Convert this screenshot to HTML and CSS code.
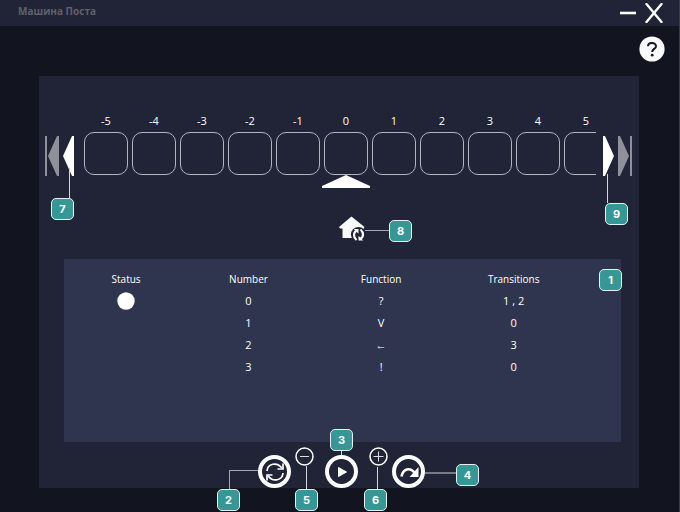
FILE: index.html
```html
<!DOCTYPE html>
<html lang="ru">
<head>
<meta charset="utf-8">
<title>Машина Поста</title>
<link rel="stylesheet" href="styles.css">
</head>
<body>
<header class="titlebar">
  <h1 class="title">Машина Поста</h1>
  <button class="icon-btn minimize" aria-label="Minimize"><svg width="16" height="4" viewBox="0 0 16 4"><path d="M0 2h16" stroke="#fff" stroke-width="2.6"/></svg></button>
  <button class="icon-btn" aria-label="Close"><svg width="18" height="20" viewBox="0 0 18 20"><path d="M1.500 1 16.500 19M16.500 1 1.500 19" stroke="#fff" stroke-width="2.4" stroke-linecap="round"/></svg></button>
</header>
<main class="workspace">
  <div class="help-row">
    <button class="icon-btn" aria-label="Help"><svg width="26" height="26" viewBox="0 0 26 26"><circle cx="13" cy="13" r="12.600" fill="#fafafa"/><path d="M9 10.300C9 5.800 17 5.800 17 10.200C17 13 13.200 12.800 13.200 16" fill="none" stroke="#151722" stroke-width="2"/><circle cx="13.200" cy="19.200" r="1.400" fill="#151722"/></svg></button>
  </div>
  <section class="panel">
    <div class="tape">
      <div class="arrows arrows-left">
        <button class="icon-btn" aria-label="To start"><svg width="14" height="40" viewBox="0 0 14 40"><path d="M0 0h2v40H0zM14 0v40h-2L3 20 12 0z" fill="#90909a"/></svg></button>
        <span class="anchor"><button class="icon-btn" aria-label="Left"><svg width="11" height="40" viewBox="0 0 11 40"><path d="M11 0v40H9L0 20 9 0z" fill="#fff"/></svg></button><i class="wire wire-7"></i><b class="badge badge-7">7</b></span>
      </div>
      <div class="viewport">
        <div class="cells">
          <div class="cell"><span>-5</span><button class="box" aria-label="Cell -5"></button></div>
          <div class="cell"><span>-4</span><button class="box" aria-label="Cell -4"></button></div>
          <div class="cell"><span>-3</span><button class="box" aria-label="Cell -3"></button></div>
          <div class="cell"><span>-2</span><button class="box" aria-label="Cell -2"></button></div>
          <div class="cell"><span>-1</span><button class="box" aria-label="Cell -1"></button></div>
          <div class="cell"><span>0</span><button class="box" aria-label="Cell 0"></button></div>
          <div class="cell"><span>1</span><button class="box" aria-label="Cell 1"></button></div>
          <div class="cell"><span>2</span><button class="box" aria-label="Cell 2"></button></div>
          <div class="cell"><span>3</span><button class="box" aria-label="Cell 3"></button></div>
          <div class="cell"><span>4</span><button class="box" aria-label="Cell 4"></button></div>
          <div class="cell"><span>5</span><button class="box" aria-label="Cell 5"></button></div>
        </div>
        <svg class="pointer" width="48" height="13" viewBox="0 0 48 13"><path d="M24 0 48 11v2H0v-2z" fill="#fff"/></svg>
      </div>
      <div class="arrows arrows-right">
        <span class="anchor"><button class="icon-btn" aria-label="Right"><svg width="11" height="40" viewBox="0 0 11 40"><path d="M0 0v40h2l9-20L2 0z" fill="#fff"/></svg></button><i class="wire wire-9"></i><b class="badge badge-9">9</b></span>
        <button class="icon-btn" aria-label="To end"><svg width="14" height="40" viewBox="0 0 14 40"><path d="M12 0h2v40h-2zM0 0v40h2l9-20L2 0z" fill="#90909a"/></svg></button>
      </div>
    </div>
    <div class="home-row">
      <span class="anchor">
        <button class="icon-btn" aria-label="Home"><svg width="28" height="26" viewBox="0 0 28 26"><path d="M13.500 .5 26.500 11 25 13.500H23V22H4.500V12.500H2L1 11z" fill="#fafafa"/><circle cx="20.500" cy="18.500" r="7.600" fill="#212336"/><path d="M18.500 24C15 21 15.200 16 19 14.500M22.500 13.500C26 16.500 25.800 21.500 22 23" fill="none" stroke="#fafafa" stroke-width="2.200"/><path d="M15.800 13h4.700v4.700zM25.200 24.500h-4.700v-4.700z" fill="#fafafa"/></svg></button>
        <i class="wire wire-8"></i><b class="badge badge-8">8</b>
      </span>
    </div>
    <div class="program anchor">
      <table class="commands">
        <thead><tr><th class="status-col">Status</th><th>Number</th><th>Function</th><th>Transitions</th></tr></thead>
        <tbody>
          <tr><td><svg class="dot" width="18" height="18" viewBox="0 0 18 18"><circle cx="9" cy="9" r="8.700" fill="#fff"/></svg></td><td>0</td><td>?</td><td>1 , 2</td></tr>
          <tr><td></td><td>1</td><td>V</td><td>0</td></tr>
          <tr><td></td><td>2</td><td>←</td><td>3</td></tr>
          <tr><td></td><td>3</td><td>!</td><td>0</td></tr>
        </tbody>
      </table>
      <b class="badge badge-1">1</b>
    </div>
    <div class="controls">
      <span class="anchor"><button class="round" aria-label="Reset"><svg width="20" height="20" viewBox="0 0 20 20"><path d="M2 9C2.500 1.500 12 -.5 16.800 6M18 11C17.500 18.500 8 20.500 3.200 14" fill="none" stroke="#fff" stroke-width="1.700"/><path d="M18 1.500V7h-5.500M2 18.500V13h5.500" fill="none" stroke="#fff" stroke-width="1.700"/></svg></button><i class="wire wire-2"></i><b class="badge badge-2">2</b></span>
      <span class="anchor small-slot"><button class="icon-btn" aria-label="Slower"><svg width="19" height="19" viewBox="0 0 19 19"><circle cx="9.500" cy="9.500" r="8.500" fill="none" stroke="#fff" stroke-width="1.500"/><path d="M5 9.500h9" stroke="#ddd"/></svg></button><i class="wire wire-5"></i><b class="badge badge-5">5</b></span>
      <span class="anchor play-slot"><button class="round" aria-label="Run"><svg width="20" height="20" viewBox="0 0 20 20"><path d="M6.500 5.500v9L14.500 10z" fill="#fff" stroke="#fff" stroke-linejoin="round"/></svg></button><i class="wire wire-3"></i><b class="badge badge-3">3</b></span>
      <span class="anchor small-slot"><button class="icon-btn" aria-label="Faster"><svg width="19" height="19" viewBox="0 0 19 19"><circle cx="9.500" cy="9.500" r="8.500" fill="none" stroke="#fff" stroke-width="1.500"/><path d="M4.500 9.500h10M9.500 4.500v10" stroke="#ddd"/></svg></button><i class="wire wire-6"></i><b class="badge badge-6">6</b></span>
      <span class="anchor"><button class="round" aria-label="Step"><svg width="20" height="20" viewBox="0 0 20 20"><path d="M2.500 14.500C4 6.500 11 5 15.500 10.500" fill="none" stroke="#fff" stroke-width="2.600"/><path d="M19.500 5v10h-9z" fill="#fff"/></svg></button><i class="wire wire-4"></i><b class="badge badge-4">4</b></span>
    </div>
  </section>
</main>
</body>
</html>
```
FILE: styles.css
```css
* { box-sizing: border-box; }
body {
  margin: 0;
  min-height: 100vh;
  background: #12141f;
  border-right: 1px solid #3b3c45;
  color: #fff;
  font: 11px/14px "Open Sans", "Noto Sans", sans-serif;
}
button { padding: 0; border: 0; background: none; color: inherit; font: inherit; }
svg { display: block; }
.titlebar {
  display: flex;
  align-items: center;
  gap: 9px;
  height: 26px;
  padding: 0 16px 0 18px;
  background: #212336;
}
.title {
  flex: 1;
  margin: 0 0 4px;
  color: #60616a;
  font-size: 10px;
  font-weight: 700;
  line-height: 14px;
}
.workspace { padding: 0 40px 24px 39px; }
.help-row { display: flex; align-items: flex-start; justify-content: flex-end; height: 50px; margin-right: -26px; padding-top: 10px; }
.panel { display: flex; flex-direction: column; padding-top: 38px; background: #212336; }
.anchor { position: relative; display: block; }

.tape { display: flex; padding: 0 7px 0 6px; }
.arrows { display: flex; align-items: flex-start; padding-top: 22px; }
.arrows-left { gap: 4px; margin-right: 10px; }
.arrows-right { gap: 4px; margin-left: 7px; }
.viewport { flex: 1; min-width: 0; overflow: hidden; }
.cells { display: flex; gap: 4px; }
.cell { flex: none; width: 44px; text-align: center; }
.cell span { display: block; }
.box {
  display: block;
  width: 44px;
  height: 43px;
  margin-top: 4px;
  border: 1px solid #b4b5bc;
  border-radius: 10px;
}
.pointer { margin-left: 238px; }

.home-row { display: flex; justify-content: center; padding: 28px 0 14px 26px; }

.program { margin: 0 18px 0 25px; min-height: 183px; padding: 9px 41px 0 6px; background: #30354f; }
.commands { width: 100%; border-collapse: collapse; table-layout: fixed; }
.commands th, .commands td { height: 22px; padding: 0; font-weight: 400; text-align: center; }
.commands th { font-size: 10px; }
.status-col { width: 22%; }
.dot { margin: 0 auto; }

.controls { display: flex; justify-content: center; gap: 4px; height: 46px; padding: 13px 0 0 5px; }
.round {
  display: grid;
  place-items: center;
  width: 33px;
  height: 33px;
  border: 4px solid #fff;
  border-radius: 50%;
}
.small-slot { align-self: flex-start; margin-top: -8px; }
.play-slot { margin: 0 7px; }

.badge {
  position: absolute;
  z-index: 1;
  width: 23px;
  height: 22px;
  border: 1px solid #e4f1f1;
  border-radius: 5px;
  background: #369796;
  font: 700 11px/20px Inter, sans-serif;
  text-align: center;
}
.wire { position: absolute; width: 1px; background: #d4d5da; }
.badge-1 { top: 10px; right: -1px; }
.badge-2 { top: 34px; left: -41px; }
.wire-2 { top: 15px; left: -29px; width: 29px; height: 20px; border: solid #a5a6af; border-width: 1px 0 0 1px; background: none; }
.badge-3 { top: -26px; left: 5px; }
.wire-3 { top: -4px; left: 16px; height: 4px; }
.badge-4 { top: 9px; left: 64px; }
.wire-4 { top: 17px; left: 33px; width: 31px; height: 2px; background: #777985; }
.badge-5 { top: 42px; left: 0; }
.wire-5 { top: 19px; left: 11px; height: 23px; }
.badge-6 { top: 42px; left: -5px; }
.wire-6 { top: 20px; left: 8px; height: 22px; }
.badge-7 { top: 62px; left: -12px; }
.wire-7 { top: 32px; left: 6px; height: 30px; }
.badge-8 { top: 4px; left: 51px; }
.wire-8 { top: 14px; left: 27px; width: 24px; height: 1px; background: #a5a6af; }
.badge-9 { top: 67px; left: 2px; }
.wire-9 { top: 38px; left: 4px; height: 29px; }
```
